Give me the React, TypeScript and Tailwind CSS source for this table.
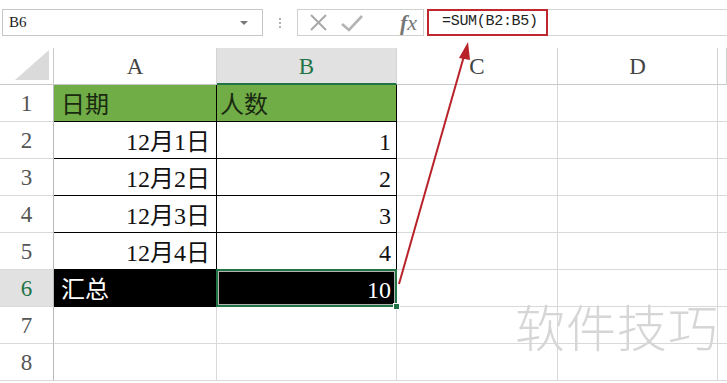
import React from "react";

const serif = "font-['Liberation_Serif','Noto_Sans_CJK_SC',serif]";

type Row = { a: string; b: string; kind: "head" | "data" | "total" | "empty" };

const rows: Row[] = [
  { a: "日期", b: "人数", kind: "head" },
  { a: "12月1日", b: "1", kind: "data" },
  { a: "12月2日", b: "2", kind: "data" },
  { a: "12月3日", b: "3", kind: "data" },
  { a: "12月4日", b: "4", kind: "data" },
  { a: "汇总", b: "10", kind: "total" },
  { a: "", b: "", kind: "empty" },
  { a: "", b: "", kind: "empty" },
];

function FormulaBar() {
  return (
    <div className="flex items-start h-[48px] pt-[9px]">
      {/* name box */}
      <div className="ml-[2px] w-[261px] h-[27px] border border-[#c6c6c6] flex items-center justify-between px-[6px]">
        <span className={`${serif} text-[15px] text-[#222]`}>B6</span>
        <span className="w-0 h-0 border-l-[4px] border-r-[4px] border-t-[4px] border-l-transparent border-r-transparent border-t-[#777] mr-[8px]" />
      </div>
      {/* dots */}
      <div className="w-[34px] h-[27px] flex flex-col items-center justify-center gap-[2px]">
        <span className="w-[2px] h-[2px] bg-[#b0b0b0]" />
        <span className="w-[2px] h-[2px] bg-[#b0b0b0]" />
        <span className="w-[2px] h-[2px] bg-[#b0b0b0]" />
      </div>
      {/* buttons */}
      <div className="w-[127px] h-[27px] border border-[#d0d0d0] flex items-center">
        <svg width="24" height="20" viewBox="0 0 24 20" className="ml-[9px]">
          <path d="M4 2 L19 17 M19 2 L4 17" stroke="#a8a8a8" strokeWidth="2" fill="none" />
        </svg>
        <svg width="26" height="20" viewBox="0 0 26 20" className="ml-[8px]">
          <path d="M3 11 L10 17 L23 3" stroke="#b4b4b4" strokeWidth="2.6" fill="none" />
        </svg>
        <span className="ml-auto mr-[6px] font-['Liberation_Serif',serif] italic text-[22px] leading-none text-[#777]">
          <span className="font-bold">f</span>x
        </span>
      </div>
      {/* formula input */}
      <div className="ml-[3px] flex-1 h-[27px] border-t border-b border-[#d4d4d4] flex items-start">
        <div className="-mt-px w-[121px] h-[27px] border-2 border-[#c0262d] flex items-center pl-[13px]">
          <span className="font-['Liberation_Mono',monospace] text-[15px] tracking-[-0.3px] text-[#222]">=SUM(B2:B5)</span>
        </div>
      </div>
    </div>
  );
}

function Sheet() {
  const cols = ["A", "B", "C", "D", ""];
  return (
    <div className="grid grid-cols-[54px_163px_180px_161px_160px_1fr] grid-rows-[37px] auto-rows-[37px]">
      {/* corner */}
      <div className="border-r border-b border-[#c8c8c8] flex items-end justify-end p-[4px]">
        <span className="w-0 h-0 border-l-[34px] border-b-[30px] border-l-transparent border-b-[#dadada]" />
      </div>
      {cols.map((c) => {
        const sel = c === "B";
        return (
          <div
            key={c || "E"}
            className={`flex items-center justify-center pt-[3px] border-r border-[#d4d4d4] ${serif} text-[23px] ${
              sel
                ? "bg-[#e1e1e1] text-[#217346] border-b-2 border-b-[#217346]"
                : "bg-white text-[#444] border-b border-b-[#c8c8c8]"
            }`}
          >
            {c}
          </div>
        );
      })}

      {rows.map((r, i) => {
        const n = i + 1;
        const sel = n === 6;
        const isHead = r.kind === "head";
        const isTotal = r.kind === "total";
        const inTable = r.kind !== "empty";
        const cellBase = `${serif} text-[24px] flex items-center pt-[3px]`;
        const cellBg = isHead ? "bg-[#70ad47] text-[#1a2a10]" : isTotal ? "bg-black text-white" : "bg-white text-[#111]";
        const border = inTable ? "border-r border-b border-black" : "border-r border-b border-[#d9d9d9]";
        return (
          <React.Fragment key={n}>
            <div
              className={`flex items-center justify-center pt-[3px] border-r border-r-[#b9b9b9] border-b border-b-[#d9d9d9] ${serif} text-[23px] ${
                sel ? "bg-[#e1e1e1] text-[#217346]" : "bg-white text-[#555]"
              }`}
            >
              {n}
            </div>
            <div className={`${cellBase} ${cellBg} ${border} ${r.kind === "data" ? "justify-end pr-[6px]" : "pl-[7px]"}`}>
              {r.a}
            </div>
            {isTotal ? (
              <div className="relative border-r border-b border-black">
                <div className={`absolute -inset-px border-2 border-[#217346] bg-black ${cellBase} justify-end pr-[4px] text-white`}>
                  <div className="absolute inset-0 border border-white/70" />
                  <span className="relative">{r.b}</span>
                  <span className="absolute -right-[5px] -bottom-[5px] w-[7px] h-[7px] bg-[#217346] border border-white" />
                </div>
              </div>
            ) : (
              <div className={`${cellBase} ${cellBg} ${border} ${isHead ? "pl-[3px]" : "justify-end pr-[5px]"}`}>
                {r.b}
              </div>
            )}
            <div className="border-r border-b border-[#d9d9d9]" />
            <div className="border-r border-b border-[#d9d9d9]" />
            <div className="border-b border-[#d9d9d9]" />
          </React.Fragment>
        );
      })}
    </div>
  );
}

export default function App() {
  return (
    <div className="relative w-[727px] h-[383px] overflow-hidden bg-white">
      <FormulaBar />
      <Sheet />
      {/* annotation arrow */}
      <svg className="absolute inset-0 pointer-events-none" width="727" height="383">
        <line x1="399" y1="284" x2="464" y2="56" stroke="#b82229" strokeWidth="2" />
        <polygon points="468,42 459,58 470,60" fill="#b82229" />
      </svg>
      {/* watermark */}
      <div className="absolute left-[515px] top-[300px] font-['Noto_Sans_CJK_SC',sans-serif] font-light text-[50px] leading-none text-[#d6d6d6] tracking-[1px]">
        软件技巧
      </div>
    </div>
  );
}
